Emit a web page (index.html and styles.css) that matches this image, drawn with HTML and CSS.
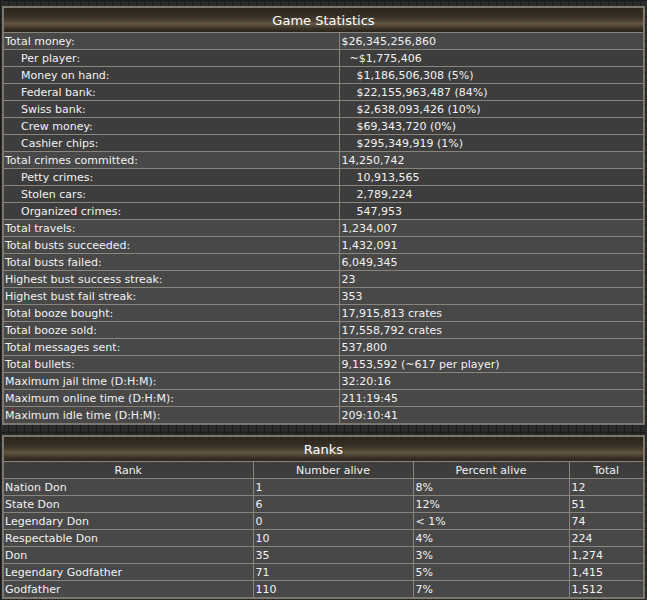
FILE: index.html
```html
<!DOCTYPE html>
<html>
<head>
<meta charset="utf-8">
<link rel="stylesheet" href="styles.css">
</head>
<body>
<div class="page">
  <table class="stats">
    <colgroup><col class="c-label"><col></colgroup>
    <thead><tr><th colspan="2" class="title">Game Statistics</th></tr></thead>
    <tbody>
      <tr class="main"><td>Total money:</td><td>$26,345,256,860</td></tr>
      <tr class="sub"><td>Per player:</td><td class="v1">~$1,775,406</td></tr>
      <tr class="sub"><td>Money on hand:</td><td class="v2">$1,186,506,308 (5%)</td></tr>
      <tr class="sub"><td>Federal bank:</td><td class="v2">$22,155,963,487 (84%)</td></tr>
      <tr class="sub"><td>Swiss bank:</td><td class="v2">$2,638,093,426 (10%)</td></tr>
      <tr class="sub"><td>Crew money:</td><td class="v2">$69,343,720 (0%)</td></tr>
      <tr class="sub"><td>Cashier chips:</td><td class="v2">$295,349,919 (1%)</td></tr>
      <tr class="main"><td>Total crimes committed:</td><td>14,250,742</td></tr>
      <tr class="sub"><td>Petty crimes:</td><td class="v2">10,913,565</td></tr>
      <tr class="sub"><td>Stolen cars:</td><td class="v2">2,789,224</td></tr>
      <tr class="sub"><td>Organized crimes:</td><td class="v2">547,953</td></tr>
      <tr class="main"><td>Total travels:</td><td>1,234,007</td></tr>
      <tr class="main"><td>Total busts succeeded:</td><td>1,432,091</td></tr>
      <tr class="main"><td>Total busts failed:</td><td>6,049,345</td></tr>
      <tr class="main"><td>Highest bust success streak:</td><td>23</td></tr>
      <tr class="main"><td>Highest bust fail streak:</td><td>353</td></tr>
      <tr class="main"><td>Total booze bought:</td><td>17,915,813 crates</td></tr>
      <tr class="main"><td>Total booze sold:</td><td>17,558,792 crates</td></tr>
      <tr class="main"><td>Total messages sent:</td><td>537,800</td></tr>
      <tr class="main"><td>Total bullets:</td><td>9,153,592 (~617 per player)</td></tr>
      <tr class="main"><td>Maximum jail time (D:H:M):</td><td>32:20:16</td></tr>
      <tr class="main"><td>Maximum online time (D:H:M):</td><td>211:19:45</td></tr>
      <tr class="main"><td>Maximum idle time (D:H:M):</td><td>209:10:41</td></tr>
    </tbody>
  </table>

  <table class="ranks">
    <colgroup><col class="r1"><col class="r2"><col class="r3"><col></colgroup>
    <thead>
      <tr><th colspan="4" class="title">Ranks</th></tr>
      <tr class="colhead"><th>Rank</th><th>Number alive</th><th>Percent alive</th><th>Total</th></tr>
    </thead>
    <tbody>
      <tr class="main"><td>Nation Don</td><td>1</td><td>8%</td><td>12</td></tr>
      <tr class="main"><td>State Don</td><td>6</td><td>12%</td><td>51</td></tr>
      <tr class="main"><td>Legendary Don</td><td>0</td><td>&lt; 1%</td><td>74</td></tr>
      <tr class="main"><td>Respectable Don</td><td>10</td><td>4%</td><td>224</td></tr>
      <tr class="main"><td>Don</td><td>35</td><td>3%</td><td>1,274</td></tr>
      <tr class="main"><td>Legendary Godfather</td><td>71</td><td>5%</td><td>1,415</td></tr>
      <tr class="main"><td>Godfather</td><td>110</td><td>7%</td><td>1,512</td></tr>
    </tbody>
  </table>
</div>
</body>
</html>
```

FILE: styles.css
```css
html, body {
  margin: 0;
  padding: 0;
}
body {
  background-color: #2a2a2a;
  background-image:
    linear-gradient(90deg, #1b1b1b 1px, transparent 1px),
    linear-gradient(#1b1b1b 1px, transparent 1px);
  background-size: 8px 8px;
  font-family: "DejaVu Sans", Verdana, sans-serif;
  font-size: 11px;
  color: #f2f2f2;
  min-height: 600px;
}
.page {
  padding: 6px 2px 0;
  display: flex;
  flex-direction: column;
  gap: 10px;
}
table {
  width: 100%;
  border-collapse: collapse;
  border: 2px solid #7d776e;
  table-layout: fixed;
}
td, th {
  border: 1px solid #8b847a;
  height: 16px;
  line-height: 15px;
  padding: 0 2px;
  white-space: nowrap;
  overflow: hidden;
  text-align: left;
  font-weight: normal;
}
td:first-child { padding-left: 1px; }
th.title {
  height: 24px;
  padding: 0;
  text-align: center;
  font-size: 13px;
  color: #ffffff;
  background-color: #3a3227;
  background-image:
    repeating-linear-gradient(90deg, rgba(0,0,0,0.06) 0 1px, transparent 1px 3px),
    linear-gradient(180deg, #2c261e 0%, #352e24 30%, #4b4133 52%, #665944 64%, #504535 76%, #342d23 90%, #2a241c 100%);
  border-bottom: 1px solid #8b847a;
}
.c-label { width: 336px; }
tr.main td { background: #484848; }
tr.sub td { background: #3d3d3d; }
tr.sub td:first-child { padding-left: 17px; }
td.v1 { padding-left: 10px; }
td.v2 { padding-left: 17px; }

.r1 { width: 250px; }
.r2 { width: 160px; }
.r3 { width: 156px; }
tr.colhead th {
  background: #3d3d3d;
  text-align: center;
}
```
